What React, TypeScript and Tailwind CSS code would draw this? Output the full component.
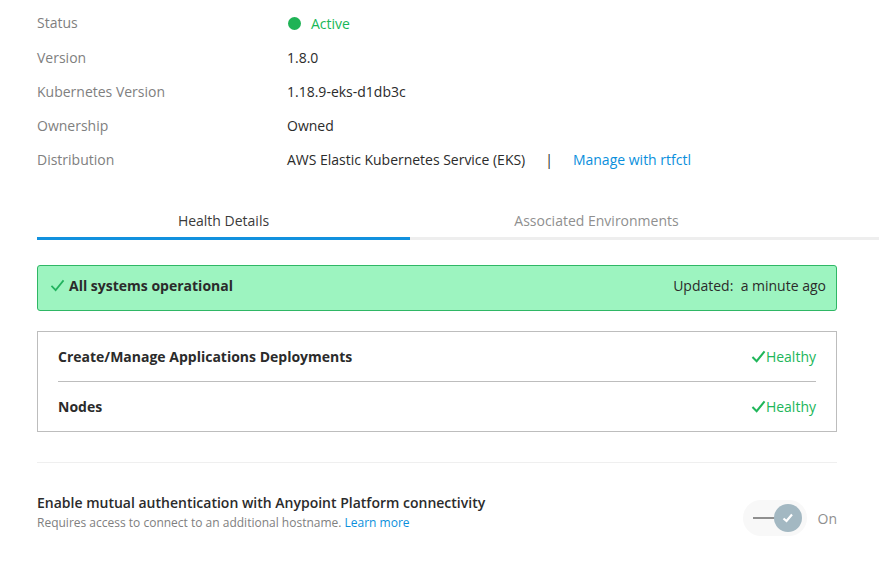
const font = { fontFamily: '"Open Sans", sans-serif' };

function Row({ label, children, labelClass }: { label: string; children: React.ReactNode; labelClass?: string }) {
  return (
    <div className="flex h-[34px] items-center">
      <div className={"w-[250px] text-[14px] text-[#808080] " + (labelClass ?? "")}>{label}</div>
      <div className="flex items-center text-[14px] text-[#2b2b2b]">{children}</div>
    </div>
  );
}

function Check({ className, width = 1.8 }: { className: string; width?: number }) {
  return (
    <svg viewBox="0 0 16 14" className={className} fill="none" stroke="currentColor" strokeWidth={width}>
      <path d="M1.5 7.5 L6 12 L14.5 1.5" />
    </svg>
  );
}

function HealthRow({ name }: { name: string }) {
  return (
    <div className="flex h-[49px] items-center justify-between">
      <span className="text-[14px] font-bold text-[#2b2b2b]">{name}</span>
      <span className="flex items-center text-[14px] text-[#20b65a]">
        <Check className="h-[13px] w-[15px]" width={2.2} />
        Healthy
      </span>
    </div>
  );
}

export default function App() {
  return (
    <div style={font} className="h-[568px] w-[879px] overflow-hidden bg-white pt-[6px]">
      <div className="pl-[37px]">
        <Row label="Status" labelClass="pb-[2px]">
          <span className="ml-[1px] mr-[10px] h-[13px] w-[13px] rounded-full bg-[#1fb356]" />
          <span className="mt-[1px] text-[#17b757]">Active</span>
        </Row>
        <Row label="Version">1.8.0</Row>
        <Row label="Kubernetes Version">1.18.9-eks-d1db3c</Row>
        <Row label="Ownership">Owned</Row>
        <Row label="Distribution">
          <span className="tracking-[-0.02px]">AWS Elastic Kubernetes Service (EKS)</span>
          <span className="ml-[20px] mr-[20px] text-[#2b2b2b]">|</span>
          <a className="text-[#0a8fdc]">Manage with rtfctl</a>
        </Row>
      </div>

      <div className="mt-[27px] flex pl-[37px]">
        <div className="flex h-[37px] w-[373px] items-start justify-center border-b-[3px] border-[#1291de] pt-[7px] text-[14px] text-[#3a3a3a]">
          Health Details
        </div>
        <div className="flex h-[37px] w-[373px] items-start justify-center border-b-[3px] border-[#eeeeee] pt-[7px] text-[14px] text-[#8f8f8f]">
          Associated Environments
        </div>
        <div className="h-[37px] flex-1 border-b-[3px] border-[#eeeeee]" />
      </div>

      <div className="ml-[37px] w-[800px]">
        <div className="mt-[25px] flex h-[46px] items-center justify-between rounded-[3px] border border-[#2fb765] bg-[#9df4c0] pb-[6px] pl-[12px] pr-[10px] text-[14px] text-[#2b2b2b]">
          <span className="flex items-center font-bold">
            <Check className="mr-[4px] h-[13px] w-[15px] text-[#22b35e]" />
            All systems operational
          </span>
          <span className="whitespace-pre">Updated:  a minute ago</span>
        </div>

        <div className="mt-[20px] flex h-[101px] flex-col border border-[#bdbdbd] px-[20px]">
          <HealthRow name="Create/Manage Applications Deployments" />
          <div className="h-px bg-[#bdbdbd]" />
          <HealthRow name="Nodes" />
        </div>

        <div className="mt-[30px] h-px bg-[#efefef]" />

        <div className="mt-[30px] flex items-start justify-between">
          <div>
            <div className="text-[14px] font-semibold leading-[20px] text-[#2b2b2b]">
              Enable mutual authentication with Anypoint Platform connectivity
            </div>
            <div className="mt-[1px] text-[12px] leading-[18px] text-[#808080]">
              Requires access to connect to an additional hostname. <a className="text-[#0a8fdc]">Learn more</a>
            </div>
          </div>
          <div className="mt-[7px] flex items-center">
            <div className="flex h-[36px] w-[64px] items-center rounded-full bg-[#f8f8f8] pl-[10px]">
              <div className="h-[2px] w-[22px] bg-[#8f8f8f]" />
              <div className="-ml-[1px] flex h-[28px] w-[28px] items-center justify-center rounded-full bg-[#a3b8c2]">
                <svg viewBox="0 0 12 10" className="h-[10px] w-[12px]" fill="none" stroke="white" strokeWidth="2.2">
                  <path d="M1.5 5.5 L4.5 8 L10 1.5" />
                </svg>
              </div>
            </div>
            <span className="ml-[11px] text-[14px] text-[#8f8f8f]">On</span>
          </div>
        </div>
      </div>
    </div>
  );
}
